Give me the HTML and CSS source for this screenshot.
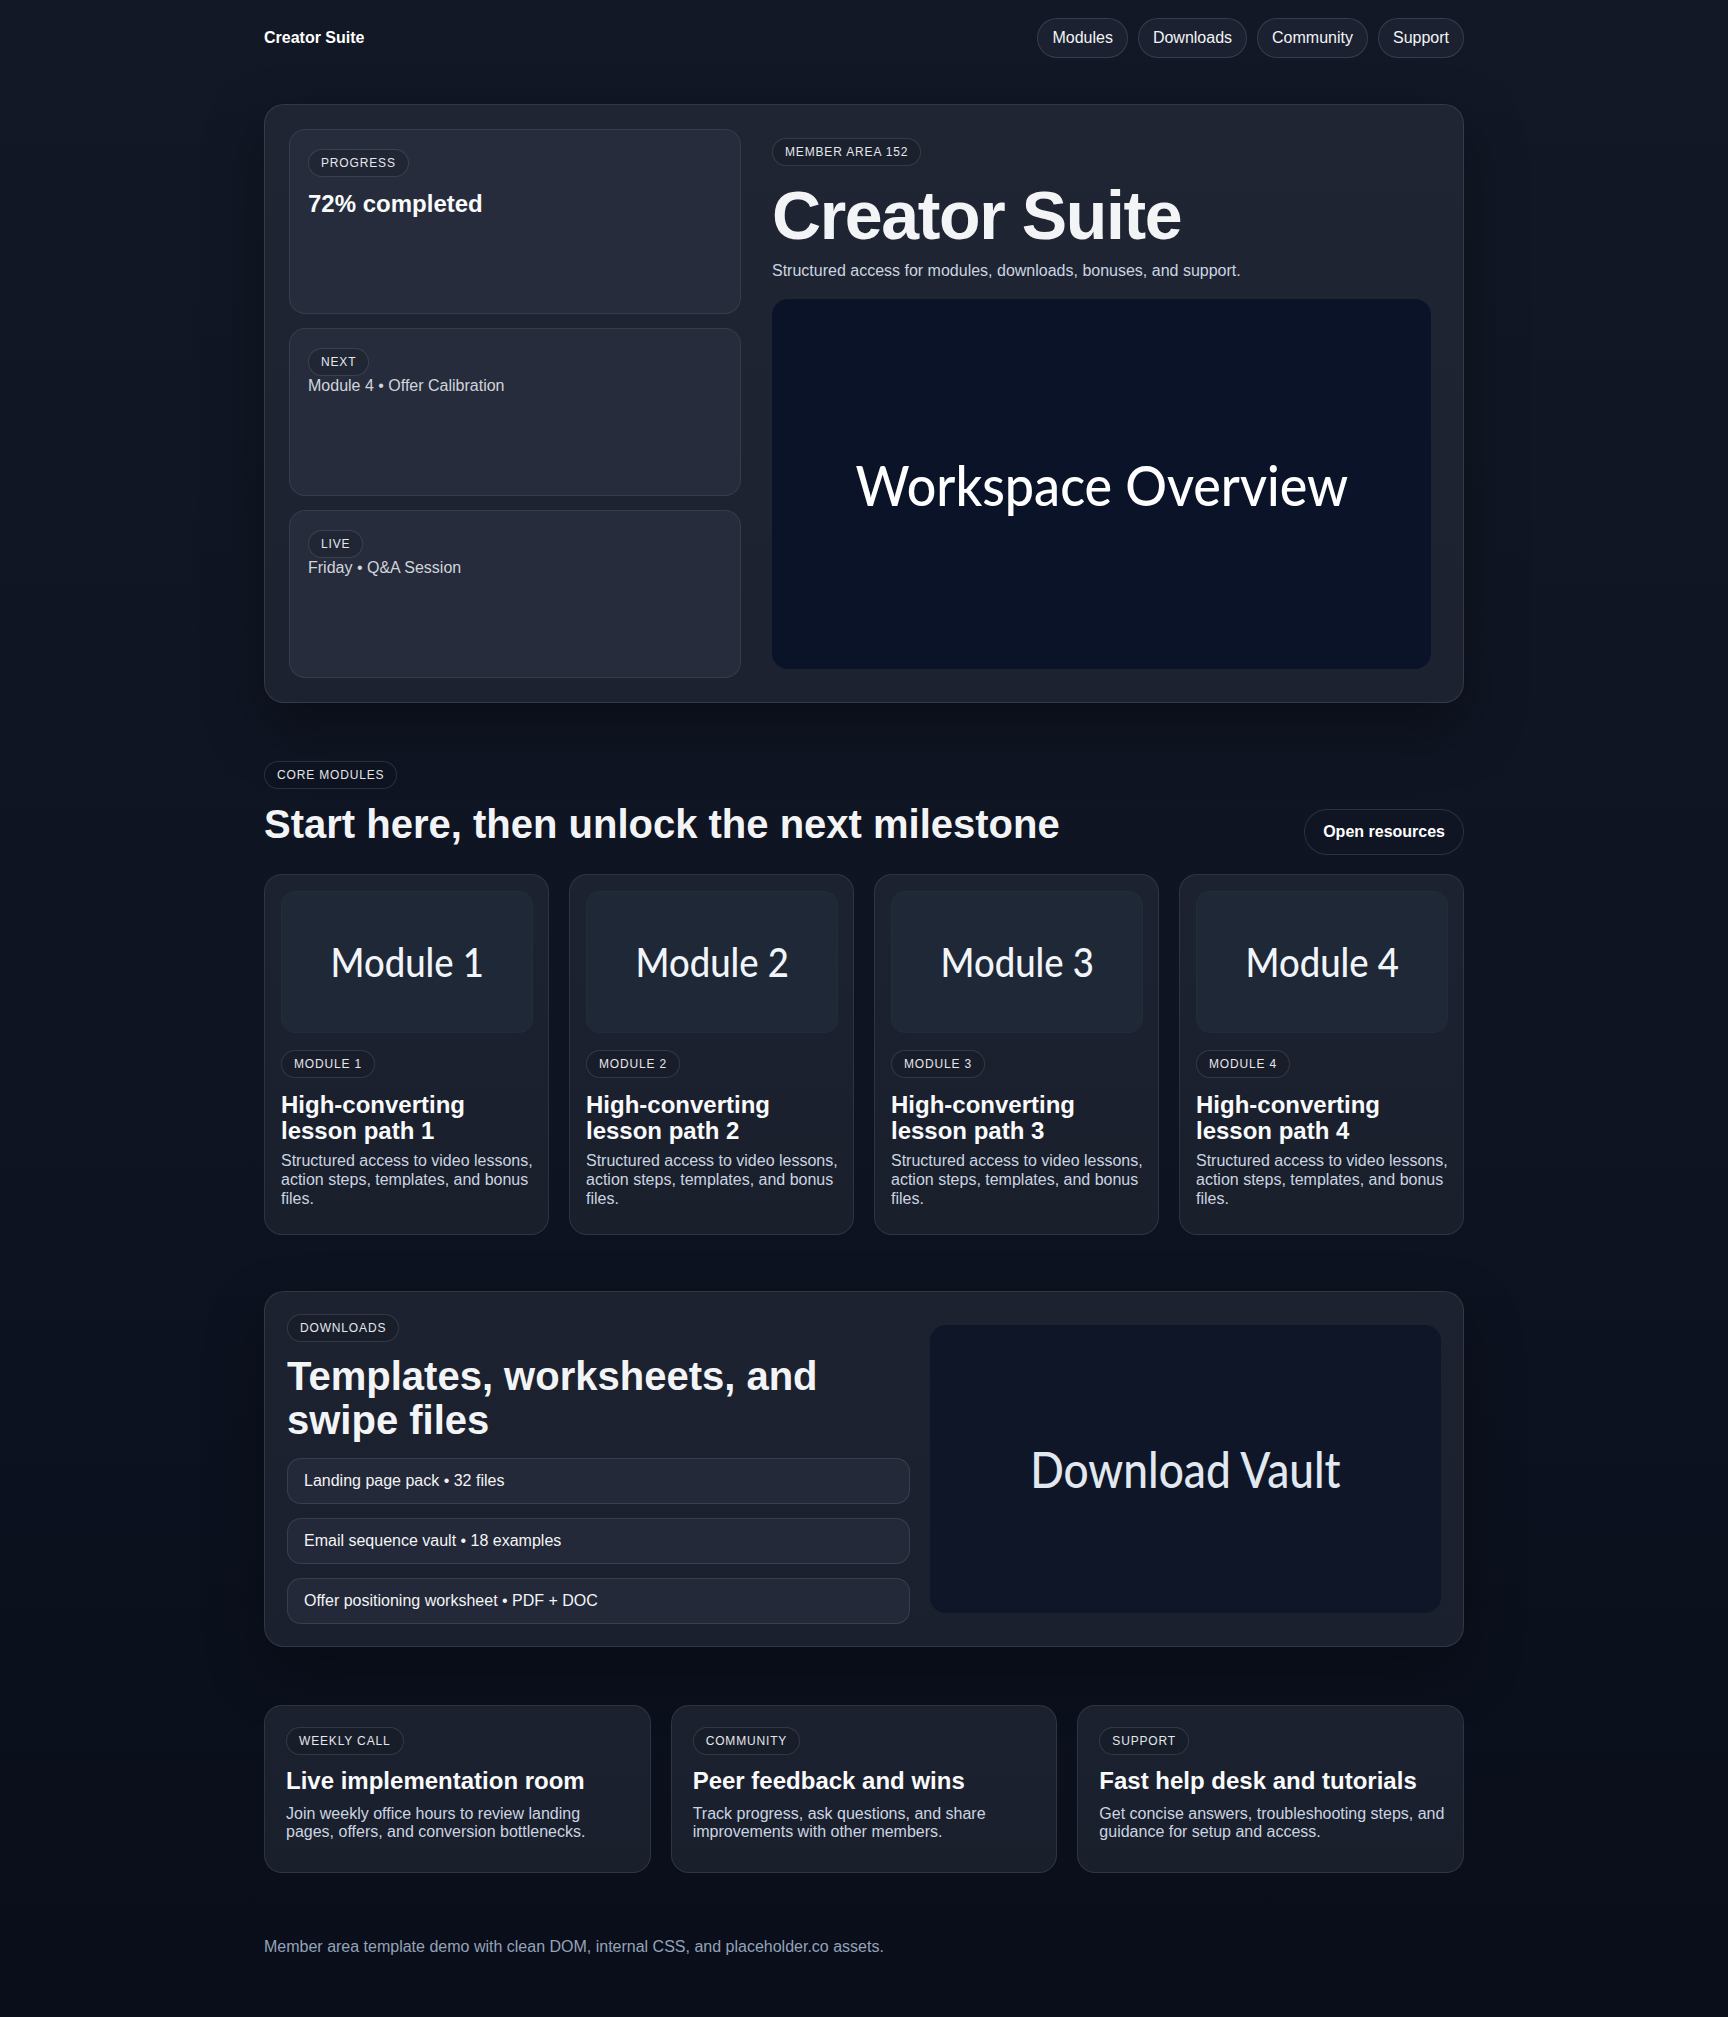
FILE: index.html
```html
<!DOCTYPE html>
<html lang="en">
<head>
<meta charset="utf-8">
<title>Creator Suite</title>
<link rel="stylesheet" href="styles.css">
</head>
<body>
<div class="page">
  <header class="topbar">
    <div class="brand">Creator Suite</div>
    <nav class="nav">
      <a class="nav-pill" href="#modules">Modules</a>
      <a class="nav-pill" href="#downloads">Downloads</a>
      <a class="nav-pill" href="#community">Community</a>
      <a class="nav-pill" href="#support">Support</a>
    </nav>
  </header>

  <main>
    <section class="hero">
      <div class="hero-stats">
        <div class="stat stat-lg">
          <span class="tag">PROGRESS</span>
          <h3 class="stat-title">72% completed</h3>
        </div>
        <div class="stat">
          <span class="tag">NEXT</span>
          <p class="stat-text">Module 4 • Offer Calibration</p>
        </div>
        <div class="stat">
          <span class="tag">LIVE</span>
          <p class="stat-text">Friday • Q&amp;A Session</p>
        </div>
      </div>
      <div class="hero-main">
        <span class="tag">MEMBER AREA 152</span>
        <h1 class="hero-title">Creator Suite</h1>
        <p class="hero-sub">Structured access for modules, downloads, bonuses, and support.</p>
        <div class="ph ph-hero"><span class="ph-text">Workspace Overview</span></div>
      </div>
    </section>

    <section class="section" id="modules">
      <div class="section-head">
        <div class="section-intro">
          <span class="tag">CORE MODULES</span>
          <h2 class="h2 head-title">Start here, then unlock the next milestone</h2>
        </div>
        <a class="btn" href="#downloads">Open resources</a>
      </div>
      <div class="module-grid">
        <article class="module">
          <div class="ph ph-module"><span class="ph-text">Module 1</span></div>
          <span class="tag">MODULE 1</span>
          <h3 class="module-title">High-converting lesson path 1</h3>
          <p class="module-desc">Structured access to video lessons, action steps, templates, and bonus files.</p>
        </article>
        <article class="module">
          <div class="ph ph-module"><span class="ph-text">Module 2</span></div>
          <span class="tag">MODULE 2</span>
          <h3 class="module-title">High-converting lesson path 2</h3>
          <p class="module-desc">Structured access to video lessons, action steps, templates, and bonus files.</p>
        </article>
        <article class="module">
          <div class="ph ph-module"><span class="ph-text">Module 3</span></div>
          <span class="tag">MODULE 3</span>
          <h3 class="module-title">High-converting lesson path 3</h3>
          <p class="module-desc">Structured access to video lessons, action steps, templates, and bonus files.</p>
        </article>
        <article class="module">
          <div class="ph ph-module"><span class="ph-text">Module 4</span></div>
          <span class="tag">MODULE 4</span>
          <h3 class="module-title">High-converting lesson path 4</h3>
          <p class="module-desc">Structured access to video lessons, action steps, templates, and bonus files.</p>
        </article>
      </div>
    </section>

    <section class="downloads" id="downloads">
      <div class="dl-left">
        <span class="tag">DOWNLOADS</span>
        <h2 class="h2 dl-title">Templates, worksheets, and swipe files</h2>
        <div class="dl-list">
          <div class="dl-item">Landing page pack • 32 files</div>
          <div class="dl-item">Email sequence vault • 18 examples</div>
          <div class="dl-item">Offer positioning worksheet • PDF + DOC</div>
        </div>
      </div>
      <div class="ph ph-vault"><span class="ph-text">Download Vault</span></div>
    </section>

    <section class="features">
      <article class="feature">
        <span class="tag">WEEKLY CALL</span>
        <h3 class="feature-title">Live implementation room</h3>
        <p class="feature-desc">Join weekly office hours to review landing pages, offers, and conversion bottlenecks.</p>
      </article>
      <article class="feature" id="community">
        <span class="tag">COMMUNITY</span>
        <h3 class="feature-title">Peer feedback and wins</h3>
        <p class="feature-desc">Track progress, ask questions, and share improvements with other members.</p>
      </article>
      <article class="feature" id="support">
        <span class="tag">SUPPORT</span>
        <h3 class="feature-title">Fast help desk and tutorials</h3>
        <p class="feature-desc">Get concise answers, troubleshooting steps, and guidance for setup and access.</p>
      </article>
    </section>
  </main>

  <footer class="footer">
    <p>Member area template demo with clean DOM, internal CSS, and placeholder.co assets.</p>
  </footer>
</div>
</body>
</html>
```

FILE: styles.css
```css
* {
  box-sizing: border-box;
}

html {
  background: #0b101d;
}

body {
  margin: 0;
  min-height: 100vh;
  font-family: "Liberation Sans", Arial, sans-serif;
  color: #e5e7eb;
  background: linear-gradient(180deg, #121826 0%, #0e1422 50%, #0a0e1b 100%);
}

.page {
  max-width: 1200px;
  margin: 0 auto;
}

/* Top bar */
.topbar {
  display: flex;
  justify-content: space-between;
  align-items: center;
  padding-top: 18px;
}

.brand {
  font-size: 16px;
  font-weight: 700;
  color: #ffffff;
}

.nav {
  display: flex;
  gap: 10px;
}

.nav-pill {
  display: flex;
  align-items: center;
  height: 40px;
  padding: 0 14px;
  border: 1px solid rgba(255, 255, 255, 0.12);
  border-radius: 999px;
  background: #1b2130;
  color: #f3f4f6;
  font-size: 16px;
  text-decoration: none;
}

/* Tag pill */
.tag {
  display: inline-flex;
  align-self: flex-start;
  align-items: center;
  height: 28px;
  padding: 0 12px;
  border: 1px solid rgba(255, 255, 255, 0.12);
  border-radius: 999px;
  background: rgba(12, 16, 28, 0.22);
  color: #e5e7eb;
  font-size: 12px;
  line-height: 14px;
  letter-spacing: 0.07em;
}

/* Placeholder images */
.ph {
  display: flex;
  align-items: center;
  justify-content: center;
  aspect-ratio: 16 / 9;
  overflow: hidden;
  font-family: Lato, "Open Sans", sans-serif;
  font-weight: 500;
  white-space: nowrap;
}

.ph-text {
  display: inline-block;
}

.ph-hero {
  width: 100%;
  border-radius: 16px;
  background: #0b1329;
  color: #ffffff;
  font-size: 56px;
}

.ph-hero .ph-text {
  transform: scaleX(0.93);
}

.ph-module {
  border-radius: 14px;
  background: #1f2837;
  color: #f1f5f9;
  font-size: 41px;
  box-shadow: inset 0 0 0 1px rgba(255, 255, 255, 0.02);
}

.ph-module .ph-text {
  transform: scaleX(0.89);
}

.ph-vault {
  border-radius: 16px;
  background: #0e1628;
  color: #e2e8f0;
  font-size: 50px;
}

.ph-vault .ph-text {
  transform: scaleX(0.885);
}

/* Hero */
.hero {
  margin-top: 46px;
  display: grid;
  grid-template-columns: 452px 659px;
  gap: 31px;
  padding: 24px;
  border: 1px solid rgba(255, 255, 255, 0.1);
  border-radius: 20px;
  background: linear-gradient(180deg, #1f2533 0%, #1d2230 100%);
  box-shadow: 0 24px 60px rgba(0, 0, 0, 0.35);
}

.hero-stats {
  display: flex;
  flex-direction: column;
  gap: 14px;
}

.stat {
  display: flex;
  flex-direction: column;
  min-height: 168px;
  padding: 19px 18px 18px;
  border: 1px solid rgba(255, 255, 255, 0.08);
  border-radius: 16px;
  background: #262c3b;
}

.stat-lg {
  min-height: 185px;
}

.stat-title {
  margin: 13px 0 0;
  font-size: 24px;
  line-height: 1.2;
  font-weight: 700;
  color: #f9fafb;
}

.stat-text {
  margin: 0;
  font-size: 16px;
  line-height: 20px;
  color: #d1d5db;
}

.hero-main {
  display: flex;
  flex-direction: column;
  align-self: center;
}

.hero-title {
  margin: 15px 0 10px;
  font-size: 68px;
  line-height: 1;
  font-weight: 700;
  letter-spacing: -0.02em;
  color: #f3f4f6;
}

.hero-sub {
  margin: 0 0 16px;
  font-size: 16px;
  line-height: 24px;
  color: #cbd5e1;
}

/* Section: modules */
.section {
  margin-top: 58px;
}

.section-head {
  display: flex;
  justify-content: space-between;
  align-items: flex-end;
  margin-bottom: 19px;
}

.section-intro {
  display: flex;
  flex-direction: column;
}

.h2 {
  font-size: 40px;
  line-height: 1.1;
  font-weight: 700;
  color: #f3f4f6;
}

.head-title {
  margin: 13px 0 9px;
}

.btn {
  display: inline-flex;
  align-items: center;
  height: 46px;
  padding: 0 18px;
  border: 1px solid rgba(255, 255, 255, 0.12);
  border-radius: 999px;
  background: #0f1522;
  color: #ffffff;
  font-size: 16px;
  font-weight: 700;
  text-decoration: none;
}

.module-grid {
  display: grid;
  grid-template-columns: repeat(4, 1fr);
  gap: 20px;
}

.module {
  display: flex;
  flex-direction: column;
  padding: 16px 15px 26px 16px;
  border: 1px solid rgba(255, 255, 255, 0.09);
  border-radius: 18px;
  background: linear-gradient(180deg, #1c2230 0%, #1a1f2c 100%);
}

.module .tag {
  margin-top: 17px;
}

.module-title {
  margin: 14px 0 6px;
  font-size: 24px;
  line-height: 1.1;
  font-weight: 700;
  color: #f9fafb;
}

.module-desc {
  margin: 0;
  font-size: 16px;
  line-height: 1.2;
  color: #cbd5e1;
}

/* Downloads */
.downloads {
  margin-top: 56px;
  display: grid;
  grid-template-columns: 1.22fr 1fr;
  gap: 20px;
  align-items: center;
  padding: 22px;
  border: 1px solid rgba(255, 255, 255, 0.1);
  border-radius: 20px;
  background: linear-gradient(180deg, #1d2230 0%, #1b202e 100%);
  box-shadow: 0 24px 60px rgba(0, 0, 0, 0.3);
}

.dl-left {
  display: flex;
  flex-direction: column;
}

.dl-title {
  margin: 12px 0 16px;
}

.dl-list {
  display: flex;
  flex-direction: column;
  gap: 14px;
}

.dl-item {
  padding: 12px 16px;
  border: 1px solid rgba(255, 255, 255, 0.1);
  border-radius: 14px;
  background: #232938;
  color: #f3f4f6;
  font-size: 16px;
  line-height: 20px;
}

/* Features */
.features {
  margin-top: 58px;
  display: grid;
  grid-template-columns: repeat(3, 1fr);
  gap: 20px;
}

.feature {
  display: flex;
  flex-direction: column;
  padding: 21px 18.5px 30px 21px;
  border: 1px solid rgba(255, 255, 255, 0.09);
  border-radius: 18px;
  background: linear-gradient(180deg, #1c2130 0%, #1a1f2c 100%);
}

.feature-title {
  margin: 12px 0 9px;
  font-size: 24px;
  line-height: 1.2;
  font-weight: 700;
  color: #f9fafb;
}

.feature-desc {
  margin: 0;
  font-size: 16px;
  line-height: 1.16;
  color: #cbd5e1;
}

/* Footer */
.footer {
  margin-top: 64px;
  padding-bottom: 60px;
}

.footer p {
  margin: 0;
  font-size: 16px;
  line-height: 20px;
  color: #94a3b8;
}
```
